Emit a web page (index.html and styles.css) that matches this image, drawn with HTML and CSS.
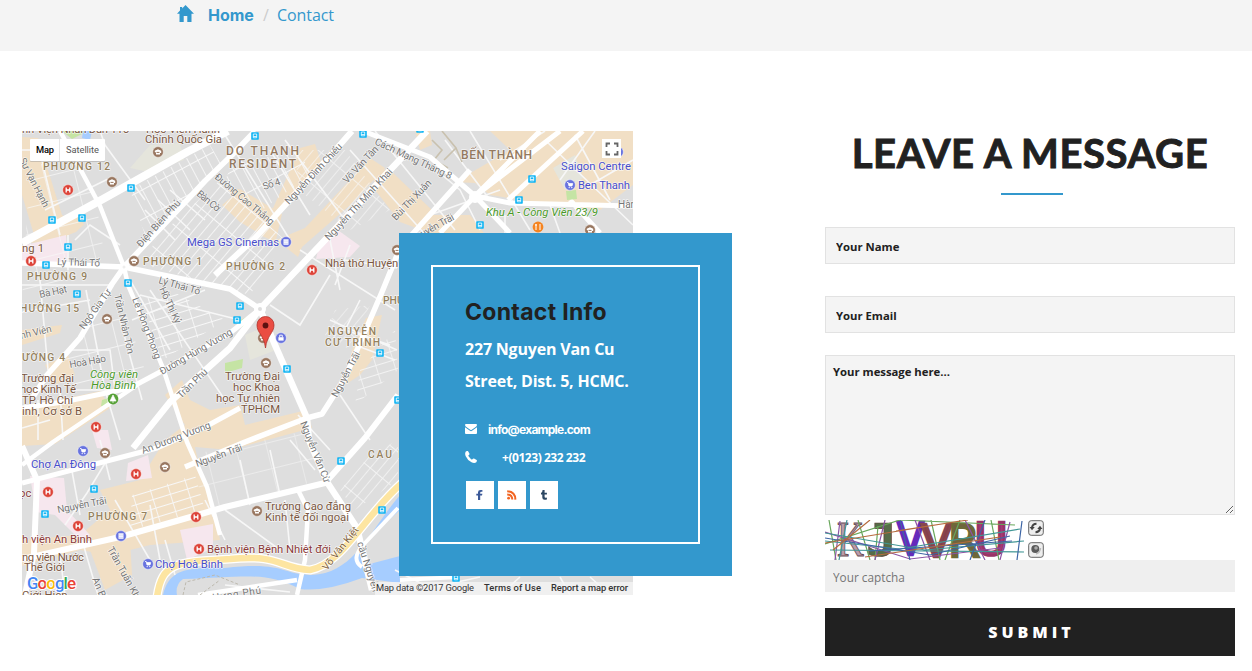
FILE: index.html
```html
<!DOCTYPE html>
<html lang="en">
<head>
<meta charset="utf-8">
<title>Contact</title>
<link rel="stylesheet" href="styles.css">
</head>
<body>
<nav class="crumbs">
  <svg class="home-icon" viewBox="0 0 17 17"><path d="M8.5 0 L17 8.7 H14.5 V17 H10.3 V11 H6.7 V17 H2.5 V8.7 H0 L3 5.6 V2 H5.2 V3.4 Z"/></svg>
  <a class="crumb-home">Home</a><span class="sep">/</span><a class="crumb-current">Contact</a>
</nav>
<main class="page">
<section class="place">
<svg class="map" viewBox="22 131 611 464">
<defs>
  <pattern id="gridA" width="9" height="26" patternUnits="userSpaceOnUse" patternTransform="rotate(-28)"><path d="M0 0V26M0 0H9" class="fine"/></pattern>
  <pattern id="gridB" width="8" height="30" patternUnits="userSpaceOnUse" patternTransform="rotate(40)"><path d="M0 0V30M0 0H8" class="fine"/></pattern>
  <pattern id="gridC" width="30" height="26" patternUnits="userSpaceOnUse" patternTransform="rotate(-14)"><path d="M0 0V26M0 0H30" class="fine"/></pattern>
  <pattern id="gridD" width="18" height="9" patternUnits="userSpaceOnUse" patternTransform="rotate(-17)"><path d="M0 0V9M0 0H18" class="fine"/></pattern>
  <g id="bus"><rect x="-3.8" y="-3.8" width="7.6" height="7.6" rx=".8" fill="#12b5f4"/><path d="M-1.700 -2H1.700V1.800H-1.700ZM-1.700 .5H1.700" fill="none" stroke="#fff" stroke-width=".8"/></g>
  <g id="hosp"><circle r="5.4" fill="#dd4338" stroke="#fff" stroke-width=".5"/><path d="M-1.8 -2.6V2.6M1.8 -2.6V2.6M-1.8 0H1.8" stroke="#fff" stroke-width="1.3"/></g>
  <g id="edu"><circle r="5.4" fill="#997760" stroke="#fff" stroke-width=".5"/><path d="M-3.2 -1.2L0 -2.8L3.2 -1.2V1H2V2.4H-2V.6L-3.2 0Z" fill="#fff"/><path d="M-1.5 .4H1.5" stroke="#997760"/></g>
  <g id="shop"><circle r="5.4" fill="#6873df" stroke="#fff" stroke-width=".5"/><path d="M-3 -2.5H-1.8L-1 1H2L2.7 -1.4H-1.5" fill="#fff" stroke="#fff" stroke-width=".8"/><circle cx="-.8" cy="2.6" r=".7" fill="#fff"/><circle cx="1.8" cy="2.6" r=".7" fill="#fff"/></g>
  <g id="film"><circle r="5.4" fill="#6873df" stroke="#fff" stroke-width=".5"/><path d="M-2.500 -2.800H2.500V2.800H-2.500Z" fill="#fff"/><path d="M-1 -2.500V2.500M1 -2.500V2.500" stroke="#6873df" stroke-width=".5" stroke-dasharray="1 .8"/></g>
  <g id="bag"><circle r="5.4" fill="#6873df" stroke="#fff" stroke-width=".5"/><path d="M-2.600 -.8H2.600V2.600H-2.600Z" fill="#fff"/><path d="M-1.300 -.8V-2.800H1.300V-.8" fill="none" stroke="#fff" stroke-width=".9"/></g>
</defs>
<rect x="22" y="131" width="611" height="464" fill="#dedede"/>
<g fill="#f1dfc5">
  <path d="M22 137L38 138L62 215L82 226L76 232L55 240L35 238L22 195Z"/>
  <path d="M22 243L78 212L84 225L58 242Z"/>
  <path d="M300 148L315 144L322 165L308 178L285 205L262 235L240 222L222 205L240 190L270 215Z"/>
  <path d="M228 190L240 189L282 214L276 240L305 228L350 180L370 158L385 168L350 205L302 247L298 257L284 246L262 236L245 213Z"/>
  <path d="M415 131H430L432 145L420 150ZM372 165L392 172L432 210L430 233L400 222L375 190Z"/>
  <path d="M490 131H633V185L600 210L520 200L490 195L475 183L455 182L510 150Z"/>
  <path d="M430 215L470 215L484 233H430Z"/>
  <path d="M22 330L62 325L60 333L22 345Z"/><path d="M45 365L68 355L75 375L55 385Z"/>
  <path d="M22 408L100 391L110 408L55 444L22 446Z"/>
  <path d="M165 395L182 380L190 400L210 410L240 405L245 425L307 410L312 428L230 450L195 447L200 470L215 510L220 540L150 545L110 555L80 550L22 566V540L80 535L110 510L100 490L140 480L165 440L185 425Z"/>
  <path d="M366 318L382 315L372 360L360 375L345 385L352 350Z"/>
  <path d="M90 550L130 540L132 575L105 590Z"/>
</g>
<g fill="#f6e7ee"><path d="M22 246L66 235L68 262H22Z"/><path d="M318 250L335 228L360 246L350 257L316 259Z"/><path d="M30 476L64 478L67 510L90 535L80 540L55 515L36 512Z"/><path d="M128 463L148 455L152 478L126 481Z"/><path d="M180 530L213 524V548L187 560Z"/><path d="M92 430L108 430L112 450L97 448Z"/></g>
<g fill="#e5e5dc"><path d="M150 145L180 143L184 160L148 172L130 168Z"/><path d="M245 335L270 325L276 350L250 360Z"/><path d="M553 168L575 155L583 178L565 190Z"/></g>
<g fill="#c5e4a4"><path d="M62 131H88L72 139Z"/><path d="M225 363L243 359L242 368L225 373Z"/><path d="M237 322L252 314L243 328Z"/><path d="M102 400L112 397L110 406H101Z"/></g>
<path d="M83 131H92L90 140L82 138Z" fill="#a6cdff"/>
<g>
  <path fill="url(#gridA)" d="M130 190L210 145L222 165L145 235Z"/>
  <path fill="url(#gridB)" d="M155 240L220 180L285 240L250 295L145 265Z"/>
  <path fill="url(#gridB)" d="M290 150L345 150L390 210L350 230L305 195Z" opacity=".7"/>
  <path fill="url(#gridA)" d="M232 165L300 150L310 175L262 210L225 180Z"/>
  <path fill="url(#gridC)" d="M30 165L90 160L105 260L22 300Z" opacity=".7"/>
  <path fill="url(#gridC)" d="M60 340L125 310L148 380L75 390Z" opacity=".8"/>
  <path fill="url(#gridD)" d="M140 300L170 290L225 320L163 360Z"/>
  <path fill="url(#gridD)" d="M132 495L195 475L205 510L130 530Z"/>
  <path fill="url(#gridB)" d="M335 310L370 305L350 350L325 335Z" opacity=".6"/>
  <path fill="url(#gridD)" d="M360 370L395 330L398 370L355 405Z" opacity=".8"/>
  <path fill="url(#gridB)" d="M340 490L370 455L398 440V480L355 510Z" opacity=".8"/>
  <path fill="url(#gridC)" d="M190 455L310 430L320 480L205 510Z" opacity=".5"/>
</g>
<path d="M163 595C169 571 183 567 225 568C285 561 282 575 312 575C355 573 370 530 400 495V510L364 542L362 566L400 556V583L362 578Q325 592 300 589C265 571 246 577 183 579Q175 585 177 595Z" fill="#a6cdff"/>
<g class="minor">
  <path d="M100 131L105 145L145 200M22 150L60 150M37 140L60 235M45 210L110 178M75 240L90 225L120 245M68 235V270M22 285L110 285M40 280L48 370M22 312L90 300M75 390L115 390L110 350L70 350M86 290L105 390L120 440M150 290L225 400M132 320L205 290M120 320L142 400M100 440L110 480M60 390L63 440M38 400V440M22 428L50 420"/>
  <path d="M145 210L175 240M158 200L190 230M170 190L205 220M130 280L170 350M140 295L240 320M225 135L290 240M270 150L310 215M285 140L345 220M350 150L430 240M375 131L455 230M300 250L395 310M330 240L340 290M345 260L397 268M270 305L300 325L330 275M350 245L335 285M360 300L345 330L390 345M355 345L395 360M330 320L397 350M298 415L330 450M340 395L370 440"/>
  <path d="M430 165L460 190L480 230M445 140L490 200M470 131L530 230M500 160L545 131M545 140L633 225M560 180L595 131M575 135L610 200M505 215V233M550 205L560 233M430 215L500 190M590 185L633 160M240 460L250 505M270 450L280 495M290 440L315 470M205 500L225 540M225 510L280 550M285 500L290 550M70 460L80 515M110 455L87 493L65 525M115 500L150 560M150 505L160 560M165 540L175 575M82 540L98 595M60 555L65 595M225 585L290 592M395 570L430 588L480 577M500 595L520 577M560 577L570 595M590 577L610 595"/>
  <path d="M432 140L442 150L434 160L448 168M442 131L456 148L444 160M456 148L462 162" stroke="#c9c1ae"/>
</g>
<g class="roads">
  <path d="M22 243L103 199L187 152L228 131" stroke-width="8"/>
  <path d="M22 263L124 267L230 289L260 309" stroke-width="5.5"/>
  <path d="M33 397L47 375L80 338L112 284L124 267L205 181L232 155L255 131" stroke-width="5.5"/>
  <path d="M60 131L100 206L124 267L128 285L163 368L187 442L207 487L220 535" stroke-width="4.5"/>
  <path d="M215 275L255 238L338 147L352 131" stroke-width="6"/>
  <path d="M133 448L170 402L230 348L260 309L325 240L392 168L427 131" stroke-width="6.5"/>
  <path d="M22 408L63 402L130 388L160 372L230 333L260 309" stroke-width="5"/>
  <path d="M137 385L53 442L22 465" stroke-width="4.5"/>
  <path d="M22 483L157 448L205 427L240 408" stroke-width="5"/>
  <path d="M185 467L245 442L307 418L322 414L345 378L382 292L400 248L470 170" stroke-width="5.5"/>
  <path d="M260 309L275 345L307 418L309 440L327 482L357 528L372 590" stroke-width="6.5"/>
  <path d="M22 559L120 537L180 520L225 507L325 483L365 438L398 395" stroke-width="6"/>
  <path d="M22 446L37 480L34 553L25 595" stroke-width="6"/>
  <path d="M298 490L308 510L305 560L297 595M198 595L297 580" stroke-width="4.5"/>
  <path d="M363 131L430 157L475 196L510 203L633 206M475 196L560 131M475 196L510 233M475 196L440 233M570 200L600 233M475 196L540 131M508 200L583 131" stroke-width="5"/>
  <path d="M398 508L364 544Q350 559 362 567" stroke-width="4"/><path d="M400 580L460 577" stroke-width="4"/>
</g>
<circle cx="260" cy="309" r="4" fill="#dedede" stroke="#fff" stroke-width="4"/>
<circle cx="124" cy="267" r="3" fill="#eee" stroke="#fff" stroke-width="3"/><circle cx="475" cy="197" r="6" fill="#fff"/>
<path d="M566 191L576 190L577 199L567 200Z" fill="#c5e4a4"/>
<path d="M157 597C162 562 176 562 230 559C280 554 279 568 310 570C342 565 365 515 402 483" fill="none" stroke="#fff" stroke-width="9"/>
<path d="M157 597C162 562 176 562 230 559C280 554 279 568 310 570C342 565 365 515 402 483" fill="none" stroke="#fde5a1" stroke-width="6.5"/>
<path d="M183 595L186 582L215 575L240 585M200 595L220 580" fill="none" stroke="#bdb9ae" stroke-dasharray="3 2"/>
<g class="street">
  <text transform="translate(19 160) rotate(63)" textLength="54">Sư Vạn Hạnh</text>
  <text transform="translate(57 265) rotate(2)" textLength="43">Lý Thái Tổ</text>
  <text transform="translate(158 283) rotate(16)" textLength="43">Lý Thái Tổ</text>
  <text transform="translate(141 248) rotate(-48)" textLength="60">Điện Biên Phủ</text>
  <text transform="translate(214 178) rotate(40)" textLength="74">Đường Cao Thắng</text>
  <text transform="translate(196 195) rotate(39)" textLength="27">Bàn Cờ</text>
  <text transform="translate(264 190) rotate(-18)" textLength="18">Số 4</text>
  <text transform="translate(289 205) rotate(-47)" textLength="79">Nguyễn Đình Chiểu</text>
  <text transform="translate(347 184) rotate(-47)" textLength="47">Võ Văn Tần</text>
  <text transform="translate(329 241) rotate(-47)" textLength="94">Nguyễn Thị Minh Khai</text>
  <text transform="translate(374 144) rotate(25)" textLength="84">Cách Mạng Tháng 8</text>
  <text transform="translate(396 221) rotate(-46)" textLength="52">Bùi Thị Xuân</text>
  <text transform="translate(412 243) rotate(-29)" textLength="49">Nguyễn Trãi</text>
  <text x="618" y="208">Hàm</text>
  <text transform="translate(40 298) rotate(-12)" textLength="28">Bà Hạt</text>
  <text transform="translate(21 339) rotate(-13)" textLength="32">nh Viên</text>
  <text transform="translate(84 330) rotate(-54)" textLength="47">Ngô Gia Tự</text>
  <text transform="translate(114 295) rotate(77)" textLength="61">Trần Nhân Tôn</text>
  <text transform="translate(132 299) rotate(69)" textLength="65">Lê Hồng Phong</text>
  <text transform="translate(159 289) rotate(65)" textLength="39">Hồ Thị Kỷ</text>
  <text transform="translate(70 368) rotate(-10)" textLength="37">Hoà Hảo</text>
  <text transform="translate(162 375) rotate(-30)" textLength="82">Đường Hùng Vương</text>
  <text transform="translate(181 399) rotate(-44)" textLength="38">Trần Phú</text>
  <text transform="translate(143 454) rotate(-21)" textLength="73">An Dương Vương</text>
  <text transform="translate(197 467) rotate(-20)" textLength="49">Nguyễn Trãi</text>
  <text transform="translate(337 398) rotate(-62)" textLength="50">Nguyễn Trãi</text>
  <text transform="translate(300 423) rotate(68)" textLength="65">Nguyễn Văn Cừ</text>
  <text transform="translate(58 513) rotate(-11)" textLength="50">Nguyễn Trãi</text>
  <text transform="translate(107 549) rotate(61)" textLength="65">Trần Tuấn Khải</text>
  <text transform="translate(92 579) rotate(67)" textLength="34">An Bình</text>
  <text transform="translate(357 543) rotate(72)" textLength="52">cầu Nguyễn</text>
  <text transform="translate(213 601) rotate(-9)" textLength="49">Hưng Phú</text>
  <text transform="translate(327 571) rotate(-52)" textLength="52" class="bold-road">Võ Văn Kiệt</text>
</g>
<g class="district">
  <text x="43" y="170" textLength="67">PHƯỜNG 12</text><text x="27" y="280" textLength="60">PHƯỜNG 9</text>
  <text x="143" y="265" textLength="59">PHƯỜNG 1</text><text x="226" y="270" textLength="59">PHƯỜNG 2</text>
  <text x="20" y="312" textLength="59">HƯỜNG 15</text><text x="22" y="361" textLength="43">ƯỜNG 4</text>
  <text x="88" y="520" textLength="59">PHƯỜNG 7</text><text x="383" y="304">PHƯỜNG</text>
  <text x="328" y="335" textLength="48">NGUYỄN</text><text x="325" y="346" textLength="55">CƯ TRINH</text><text x="368" y="458" textLength="55">CAU KHO</text>
  <g class="big"><text x="226" y="155" textLength="73">DO THANH</text><text x="229" y="168" textLength="67">RESIDENT</text><text x="461" y="159" textLength="71">BẾN THÀNH</text></g>
</g>
<g class="poi">
  <text x="22" y="133" textLength="107">nh Viện Nhân Dân 115</text><text x="146" y="133" textLength="74">Học Viện Hành</text><text x="145" y="143" textLength="77">Chính Quốc Gia</text>
  <text x="22" y="252" textLength="22">ng 1</text><text x="325" y="267" textLength="88">Nhà thờ Huyện Sỹ</text>
  <text x="21" y="382" textLength="53">Trường đại</text><text x="20" y="393" textLength="56">học Kinh Tế</text><text x="22" y="404" textLength="51">TP. Hồ Chí</text><text x="22" y="415" textLength="60">inh, Cơ sở B</text>
  <g text-anchor="end"><text x="280" y="380" textLength="55">Trường Đại</text><text x="280" y="391" textLength="47">học Khoa</text><text x="280" y="402" textLength="64">học Tự nhiên</text><text x="280" y="413" textLength="39">TPHCM</text></g>
  <text x="265" y="510" textLength="86">Trường Cao đẳng</text><text x="265" y="521" textLength="84">Kinh tế đối ngoại</text>
  <text x="22" y="561" textLength="62">ng viên Nước</text><text x="24" y="571" textLength="41">Thế Giới</text><text x="22" y="599">Giới Hiện</text>
  <g fill="#8b3a3a"><text x="22" y="543" textLength="70">h viện An Bình</text><text x="207" y="553" textLength="124">Bệnh viện Bệnh Nhiệt đới</text><text x="19" y="497">ọc</text></g>
  <g fill="#484ecb"><text x="187" y="246" textLength="92">Mega GS Cinemas</text><text x="31" y="468" textLength="65">Chợ An Đông</text><text x="155" y="568" textLength="68">Chợ Hoà Bình</text><text x="561" y="170" textLength="70">Saigon Centre</text><text x="578" y="189" textLength="52">Ben Thanh</text></g>
  <g fill="#4b9a2a" font-style="italic"><text x="90" y="378" textLength="48">Công viên</text><text x="91" y="389" textLength="45">Hòa Bình</text><text x="486" y="216" textLength="112">Khu A - Công Viên 23/9</text></g>
</g>
<use href="#bus" x="131" y="188"/><use href="#bus" x="52" y="220"/><use href="#bus" x="82" y="218"/><use href="#bus" x="68" y="247"/><use href="#bus" x="46" y="265"/><use href="#bus" x="128" y="283"/><use href="#bus" x="77" y="294"/><use href="#bus" x="255" y="136"/><use href="#bus" x="363" y="134"/><use href="#bus" x="420" y="129"/><use href="#bus" x="532" y="179"/><use href="#bus" x="519" y="200"/><use href="#bus" x="480" y="225"/><use href="#bus" x="240" y="306"/><use href="#bus" x="237" y="320"/><use href="#bus" x="287" y="369"/><use href="#bus" x="380" y="353"/><use href="#bus" x="398" y="400"/><use href="#bus" x="94" y="489"/><use href="#bus" x="45" y="514"/><use href="#bus" x="341" y="461"/><use href="#bus" x="382" y="510"/><use href="#bus" x="456" y="578"/>
<use href="#hosp" x="68" y="190"/><use href="#hosp" x="31" y="261"/><use href="#hosp" x="312" y="270"/><use href="#hosp" x="96" y="427"/><use href="#hosp" x="136" y="474"/><use href="#hosp" x="48" y="492"/><use href="#hosp" x="78" y="526"/><use href="#hosp" x="196" y="517"/><use href="#hosp" x="199" y="549"/>
<use href="#edu" x="158" y="152"/><use href="#edu" x="112" y="182"/><use href="#edu" x="134" y="261"/><use href="#edu" x="397" y="250"/><use href="#edu" x="107" y="319"/><use href="#edu" x="266" y="363"/><use href="#edu" x="263" y="338"/><use href="#edu" x="105" y="453"/><use href="#edu" x="165" y="467"/><use href="#edu" x="257" y="511"/><use href="#edu" x="590" y="230"/>
<use href="#film" x="286" y="242"/><use href="#bag" x="281" y="338"/><use href="#shop" x="570" y="185"/><use href="#shop" x="83" y="451"/><use href="#film" x="121" y="536"/><use href="#shop" x="148" y="564"/><use href="#shop" x="618" y="152"/>
<circle cx="538" cy="227" r="5.4" fill="#f58420"/><path d="M536 224V230M540 224V230M535 225H537" stroke="#fff"/>
<circle cx="113" cy="399" r="5.4" fill="#58a239"/><path d="M113 395L116 401H110ZM113 400V403" fill="#fff" stroke="#fff" stroke-width=".7"/>
<path d="M265.500 348C264 335 257 333 257 325A8.500 8.500 0 0 1 274 325C274 333 267 335 265.500 348Z" fill="#ea4d43" stroke="#b1342c" stroke-width=".8"/><circle cx="265.500" cy="325.500" r="2.900" fill="#5c1110"/>
<text class="glogo" x="27" y="589" textLength="49"><tspan fill="#4285f4">G</tspan><tspan fill="#ea4335">o</tspan><tspan fill="#fbbc05">o</tspan><tspan fill="#4285f4">g</tspan><tspan fill="#34a853">l</tspan><tspan fill="#ea4335">e</tspan></text>
<rect x="375" y="582" width="258" height="13" fill="#f5f5f5" opacity=".78"/>
<g class="legal"><text x="376" y="591" textLength="98">Map data ©2017 Google</text><g class="strong"><text x="484" y="591" textLength="57">Terms of Use</text><text x="551" y="591" textLength="77">Report a map error</text></g></g>
<rect x="30" y="140" width="75" height="22" rx="1" fill="#999" opacity=".45"/><rect x="30" y="139" width="75" height="22" rx="1" fill="#fff"/><path d="M59.500 139V161" stroke="#e6e6e6"/>
<g class="control"><text x="36" y="153" textLength="18" class="on">Map</text><text x="66" y="153" textLength="33">Satellite</text></g>
<rect x="602" y="139" width="19" height="19" fill="#fff"/><path d="M606.500 147V143.500H610M614 143.500H617.500V147M617.500 151V154.500H614M610 154.500H606.500V151" fill="none" stroke="#666" stroke-width="1.800"/>
</svg>
<aside class="card"><div class="card-frame">
  <h2 class="card-title"><span>Contact Info</span></h2>
  <p class="address">227 Nguyen Van Cu<br>Street, Dist. 5, HCMC.</p>
  <div class="line mail"><svg class="ico" viewBox="0 0 12 10"><path d="M0 1Q0 0 1 0H11Q12 0 12 1Q12 2 10 3.500L6 6.200L2 3.500Q0 2 0 1ZM0 3.200L5 6.800Q6 7.500 7 6.800L12 3.200V9Q12 10 11 10H1Q0 10 0 9Z"/></svg><span>info@example.com</span></div>
  <div class="line phone"><svg class="ico" viewBox="0 0 12 12"><path d="M.8 .5Q2.300 -.4 3.100 .2L4.500 2.800Q4.700 3.400 3.300 4.500Q3.500 5.500 6.500 8.500Q7.300 8.900 8 7.800Q8.500 7.200 9 7.500L11.700 9Q12.300 9.400 11.300 11.200Q9.500 12.500 6.500 11.300Q2.300 9 .6 5Q-.4 2.500 .8 .5Z"/></svg><span>+(0123) 232 232</span></div>
  <div class="social">
    <a><svg viewBox="0 0 28 28"><path d="M12 19V14.600H10.300V12.700H12V11.300Q12 8.900 14.500 8.900H16.400V10.800H15.200Q14.200 10.800 14.200 11.700V12.700H16.400L16 14.600H14.200V19Z" fill="#3b5998"/></svg></a>
    <a><svg viewBox="0 0 28 28"><circle cx="10.600" cy="17.200" r="1.400" fill="#f26522"/><path d="M9.200 13.400Q14.200 13.500 14.300 18.600M9.200 10.300Q17.200 10.600 17.400 18.600" fill="none" stroke="#f26522" stroke-width="2"/></svg></a>
    <a><svg viewBox="0 0 28 28"><path d="M12.600 9H14.600V11.700H16.900V13.600H14.600V16Q14.700 17.200 16.900 16.600V18.500Q12.300 19.800 12.300 16.500V13.600H11V12Q12.500 11.500 12.600 9Z" fill="#2c4762"/></svg></a>
  </div>
</div></aside>
</section>
<form class="message">
  <h1 class="title"><span>LEAVE A MESSAGE</span></h1>
  <i class="rule"></i>
  <input class="field" type="text" placeholder="Your Name">
  <input class="field email" type="text" placeholder="Your Email">
  <textarea class="field body" placeholder="Your message here..."></textarea>
  <div class="captcha">
    <svg class="captcha-image" viewBox="825 520 200 40">
      <g class="letters"><text x="837" y="556" class="k" textLength="27" lengthAdjust="spacingAndGlyphs">K</text><text x="866" y="556" class="j" fill="#566c49" stroke="#65423b" textLength="31" lengthAdjust="spacingAndGlyphs">J</text><text x="897" y="555" fill="#6828bd" stroke="#652cba" textLength="27" lengthAdjust="spacingAndGlyphs">V</text><text x="921" y="557" fill="#873f49" stroke="#87474f" textLength="31" lengthAdjust="spacingAndGlyphs">V</text><text x="948" y="557" fill="#706043" stroke="#6e6a38" textLength="32" lengthAdjust="spacingAndGlyphs">R</text><text x="974" y="555" fill="#a83978" stroke="#983466" textLength="34" lengthAdjust="spacingAndGlyphs">U</text></g>
      <g fill="none" stroke-width="1.200">
        <path stroke="#69a75c" d="M829 520L836 560M858 520L870 560M878 526L875 560M931 520L940 560M960 520L945 560M991 520L999 560M825 544L900 520L1015 525"/>
        <path stroke="#8c54a5" d="M840 521L835 560M885 520L875 560M915 520L930 560M965 520L985 560M1010 522L1000 560M825 532L910 559L1000 548"/>
        <path stroke="#429796" d="M825 533L925 550L1024 541M825 541L900 549L1020 529M830 550L1024 552M847 520L839 560"/>
        <path stroke="#3d65a5" d="M825 538L930 555L1010 536M900 520L910 560M1022 521L1017 560M985 520L970 560M870 551L1012 541"/>
        <path stroke="#b66b3e" d="M825 543L960 521M833 550L870 520M896 531L968 520M865 557L1000 537"/>
      </g>
    </svg>
    <div class="tools">
      <svg viewBox="0 0 16 16"><rect x=".7" y=".7" width="14.600" height="14.600" rx="2.500" fill="#eee" stroke="#666"/><path d="M4 7.500Q4.500 4 8.500 3.800M12 8.500Q11.500 12 7.500 12.200" fill="none" stroke="#444" stroke-width="2"/><path d="M1.500 7H6.800L4 10.200ZM9.200 9H14.500L12 5.800Z" fill="#444"/></svg>
      <svg viewBox="0 0 16 16"><rect x=".7" y=".7" width="14.600" height="14.600" rx="2.500" fill="#eee" stroke="#666"/><circle cx="7.300" cy="7" r="4" fill="#5a5a5a"/><circle cx="8" cy="6" r="1.800" fill="#aaa"/><path d="M8 12Q12 11 12.500 6" fill="none" stroke="#bbb" stroke-width="1.500"/></svg>
    </div>
  </div>
  <input class="captcha-field" type="text" placeholder="Your captcha">
  <button class="submit" type="button"><span>SUBMIT</span></button>
</form>
</main>
</body>
</html>
```
FILE: styles.css
```css
*{box-sizing:border-box}
body{margin:0;height:671px;overflow:hidden;background:#fff;font-family:"Open Sans",sans-serif;color:#212121}
.crumbs{height:51px;background:#f4f4f4;display:flex;align-items:flex-start;padding:5px 0 0 177px;font-size:16px;line-height:20px;color:#3398cd}
.home-icon{width:17px;height:17px;margin-right:14px;fill:#3398cd}
.crumb-home{font-family:Inter,sans-serif;font-weight:700;width:47px}
.sep{color:#ccc;padding:0 8px}
.crumb-current{letter-spacing:-.05px}
.page{display:flex;padding:80px 17px 0 22px;justify-content:space-between;align-items:flex-start}
.place{position:relative;width:611px;height:464px}
.map{display:block;width:611px;height:464px;font-family:Roboto,sans-serif}
.fine{fill:none;stroke:#f8f8f8;stroke-width:1.8}
.minor{fill:none;stroke:#f7f7f7;stroke-width:1.6}
.roads{fill:none;stroke:#fff;stroke-linejoin:round}
.map text{paint-order:stroke;stroke:rgba(255,255,255,.7);stroke-width:1.4px;stroke-linejoin:round}
.street{font-size:10px;fill:#777}
.bold-road{fill:#80613d}
.district{font-size:10.3px;font-weight:500;fill:#95815d}
.big{font-size:12px;fill:#93795f}
.poi{font-size:11.3px;fill:#7b5742}
.map .glogo{font:500 17px Roboto,sans-serif;stroke:#fff;stroke-width:2px}
.map .legal text,.map .control text{stroke:none}
.legal{font-size:9.3px;fill:#333}
.strong{font-weight:500}
.control{font-size:9.3px;fill:#565656}
.on{font-weight:500;fill:#000}
.card{position:absolute;left:377px;top:102px;width:333px;height:343px;padding:32px;background:#3398cd}
.card-frame{width:269px;height:279px;border:2px solid #fff;padding:30px 32px 0;color:#fff}
.card-title{margin:0;height:30px;font:700 23px/30px Inter,sans-serif;letter-spacing:.3px;color:#212121;white-space:nowrap}
.address{margin:6px 0 0;font-size:16px;font-weight:700;line-height:32px;white-space:nowrap;letter-spacing:-.2px}
.line{display:flex;align-items:center;font-size:12px;font-weight:700;line-height:28px;height:28px}
.mail{margin-top:18px;font-family:Inter,sans-serif;letter-spacing:-.75px}
.phone{letter-spacing:-.45px}
.ico{width:12px;height:12px;fill:#fff;margin-right:11px}
.phone .ico{margin-right:25px}
.line span{position:relative;top:1px}
.social{display:flex;gap:4px;margin:10px 0 0 1px}
.social a{width:28px;height:28px;background:#fff}
.social svg{display:block}
.message{width:410px;display:flex;flex-direction:column}
.title{margin:0;height:44px;font:700 40px/44px Lato,sans-serif;letter-spacing:.6px;-webkit-text-stroke:.9px #212121;text-align:center;white-space:nowrap}
.rule{width:62px;height:2px;background:#3398cd;margin:18px 0 32px 176px}
.field{width:410px;height:37px;border:1px solid #e2e2e2;border-radius:0;background:#f4f4f4;padding:1px 10px 0;font:700 11.3px "Open Sans",sans-serif;outline:0}
.field::placeholder{color:#212121;opacity:1}
.email{margin-top:32px}
.body{margin-top:22px;height:160px;padding:8px 7px}
.captcha{display:flex;gap:3px;height:40px;margin-top:5px}
.captcha-image{width:200px;height:40px}
.letters{font:400 45px "DejaVu Sans",sans-serif;stroke-width:2.6px}
.letters .j{font:700 45px "DejaVu Sans Mono",monospace;stroke-width:.6px}
.letters .k{font:400 50px "Liberation Serif",serif;fill:#bb9ca9;stroke:#674d55;stroke-width:1px}
.tools{display:flex;flex-direction:column;gap:6px}
.tools svg{width:16px;height:16px}
.captcha-field{width:410px;height:32px;border:0;background:#efefef;padding:2px 8px 0;font:11.8px "Open Sans",sans-serif}
.captcha-field::placeholder{color:#757575}
.submit{width:410px;height:48px;margin-top:16px;border:0;background:#212121;color:#fff;font:800 16px "Open Sans",sans-serif;letter-spacing:4px;padding:0 0 0 3px}
```
